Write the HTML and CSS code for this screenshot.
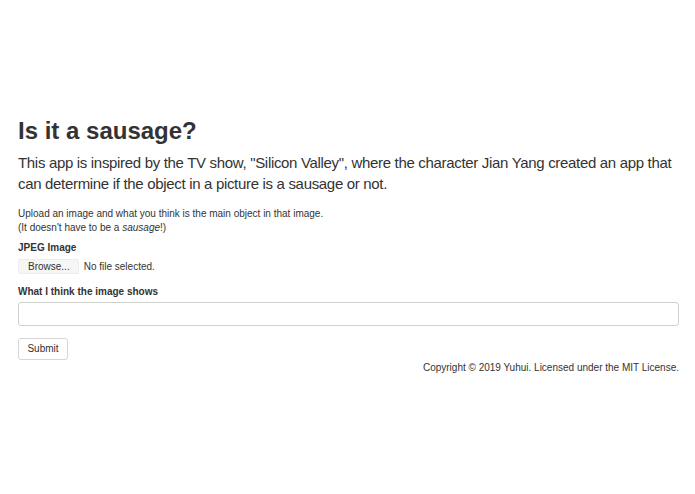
FILE: index.html
```html
<!DOCTYPE html>
<html lang="en">
<head>
  <meta charset="UTF-8">
  <meta name="viewport" content="width=device-width, initial-scale=1.0">
  <title>Is it a sausage?</title>
  <link rel="stylesheet" href="styles.css">
</head>
<body>
  <div class="container">
    <h1>Is it a sausage?</h1>
    <p class="lead">This app is inspired by the TV show, "Silicon Valley", where the character Jian Yang created an app that can determine if the object in a picture is a sausage or not.</p>

    <p class="intro">Upload an image and what you think is the main object in that image.<br>(It doesn't have to be a <em>sausage</em>!)</p>

    <form id="uploadForm">
      <label for="image">JPEG Image</label>
      <div class="file-row">
        <span class="browse">Browse...</span>
        <span class="file-name">No file selected.</span>
      </div>

      <label for="guess">What I think the image shows</label>
      <input type="text" id="guess" name="guess">

      <button type="button">Submit</button>
    </form>

    <footer class="copyright">Copyright &copy; 2019 Yuhui. Licensed under the MIT License.</footer>
  </div>
</body>
</html>
```

FILE: styles.css
```css
body {
  font-family: "Liberation Sans", Arial, sans-serif;
  font-size: 10px;
  line-height: 14px;
  color: #333;
  background-color: #fff;
  margin: 0;
}
.container {
  padding: 118px 16px 0 18px;
}
h1 {
  font-size: 24px;
  line-height: 26px;
  font-weight: bold;
  margin: 0 0 8px 0;
}
.lead {
  font-size: 15px;
  line-height: 21px;
  letter-spacing: -0.32px;
  margin: 0 0 13px 0;
}
.intro {
  margin: 0 0 6px 0;
}
label {
  display: block;
  font-weight: bold;
  margin-bottom: 4px;
}
.file-row {
  display: flex;
  align-items: center;
  gap: 5px;
  margin-bottom: 11px;
}
.browse {
  display: inline-block;
  height: 13px;
  line-height: 13px;
  padding: 0 8px 0 9px;
  background-color: #f6f6f6;
  border: 1px solid #ececec;
  border-radius: 2px;
}
input {
  display: block;
  width: 100%;
  height: 24px;
  box-sizing: border-box;
  border: 1px solid #cfcfcf;
  border-radius: 3px;
  margin: -1px 0 12px 0;
  font: inherit;
}
button {
  display: block;
  height: 22px;
  width: 50px;
  padding: 0;
  font: inherit;
  color: #333;
  background-color: #fff;
  border: 1px solid #d6d6d6;
  border-radius: 3px;
}
.copyright {
  text-align: right;
  margin-top: 1px;
}
```
